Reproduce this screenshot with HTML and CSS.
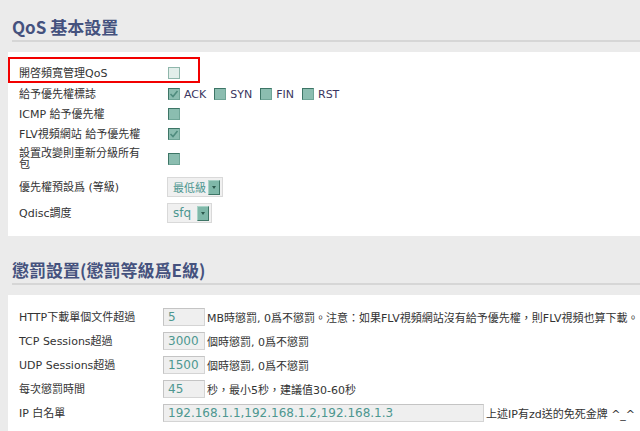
FILE: index.html
```html
<!DOCTYPE html>
<html lang="zh-Hant">
<head>
<meta charset="utf-8">
<title>QoS 基本設置</title>
<link rel="stylesheet" href="styles.css">
</head>
<body>
<div class="page">
  <section class="section">
    <div class="head head-first"><h2 class="title">QoS 基本設置</h2></div>
    <div class="panel panel-basic">
      <div class="highlight"></div>
      <div class="row r1">
        <div class="label">開啓頻寬管理QoS</div>
        <div class="field"><span class="cb cb-light"></span></div>
      </div>
      <div class="row r2">
        <div class="label">給予優先權標誌</div>
        <div class="field flags">
          <span class="cb cb-checked"><svg viewBox="0 0 10 10" width="10" height="10"><path d="M1.5 5 L4 7.5 L8.5 2" fill="none" stroke="#4f8c7e" stroke-width="1.6"/></svg></span><span class="flag">ACK</span>
          <span class="cb"></span><span class="flag">SYN</span>
          <span class="cb"></span><span class="flag">FIN</span>
          <span class="cb"></span><span class="flag">RST</span>
        </div>
      </div>
      <div class="row r3">
        <div class="label">ICMP 給予優先權</div>
        <div class="field"><span class="cb"></span></div>
      </div>
      <div class="row r4">
        <div class="label">FLV視頻網站 給予優先權</div>
        <div class="field"><span class="cb cb-checked"><svg viewBox="0 0 10 10" width="10" height="10"><path d="M1.5 5 L4 7.5 L8.5 2" fill="none" stroke="#4f8c7e" stroke-width="1.6"/></svg></span></div>
      </div>
      <div class="row r5">
        <div class="label">設置改變則重新分級所有包</div>
        <div class="field"><span class="cb"></span></div>
      </div>
      <div class="row r6">
        <div class="label">優先權預設爲 (等級)</div>
        <div class="field"><span class="select sel-level"><span class="sel-text">最低級</span><span class="arrow"></span></span></div>
      </div>
      <div class="row r7">
        <div class="label">Qdisc調度</div>
        <div class="field"><span class="select sel-qdisc"><span class="sel-text">sfq</span><span class="arrow"></span></span></div>
      </div>
    </div>
  </section>

  <section class="section">
    <div class="head"><h2 class="title">懲罰設置(懲罰等級爲E級)</h2></div>
    <div class="panel panel-penalty">
      <div class="prow">
        <div class="label">HTTP下載單個文件超過</div>
        <div class="field"><span class="input">5</span><span class="note">MB時懲罰, 0爲不懲罰。注意：如果FLV視頻網站沒有給予優先權，則FLV視頻也算下載。</span></div>
      </div>
      <div class="prow">
        <div class="label">TCP Sessions超過</div>
        <div class="field"><span class="input">3000</span><span class="note">個時懲罰, 0爲不懲罰</span></div>
      </div>
      <div class="prow">
        <div class="label">UDP Sessions超過</div>
        <div class="field"><span class="input">1500</span><span class="note">個時懲罰, 0爲不懲罰</span></div>
      </div>
      <div class="prow">
        <div class="label">每次懲罰時間</div>
        <div class="field"><span class="input">45</span><span class="note">秒，最小5秒，建議值30-60秒</span></div>
      </div>
      <div class="prow">
        <div class="label">IP 白名單</div>
        <div class="field"><span class="input input-wide">192.168.1.1,192.168.1.2,192.168.1.3</span><span class="note">上述IP有zd送的免死金牌 ^_^</span></div>
      </div>
    </div>
  </section>
</div>
</body>
</html>
```

FILE: styles.css
```css
html, body {
  margin: 0;
  padding: 0;
  background: #ebebeb;
  overflow: hidden;
}
body {
  font-family: "DejaVu Sans", "Noto Sans CJK TC", sans-serif;
  font-size: 11px;
  color: #333;
  width: 640px;
  height: 431px;
}
.page {
  width: 640px;
}
.head {
  padding-top: 22px;
}
.head-first {
  padding-top: 15px;
}
.title {
  margin: 0 0 10px 12px;
  padding: 0 0 1px 0;
  height: 24px;
  line-height: 24px;
  font-family: "Noto Sans CJK TC", sans-serif;
  font-size: 17px;
  font-weight: 700;
  color: #45527e;
  border-bottom: 2px solid #d6d6d6;
  white-space: nowrap;
}
.panel {
  margin-left: 8px;
  background: #ffffff;
  position: relative;
  padding-left: 11px;
}
.panel-basic {
  padding-top: 11px;
  padding-bottom: 13px;
}
.highlight {
  position: absolute;
  left: 0;
  top: 5px;
  width: 192px;
  height: 26px;
  box-sizing: border-box;
  border: 2px solid #f20000;
}
.row {
  display: grid;
  grid-template-columns: 149px 1fr;
  align-items: center;
  height: 20px;
}
.r2 { margin-top: 1px; }
.r5 { margin-top: 3px; height: 24px; }
.r6 { margin-top: 6px; }
.r7 { margin-top: 6px; }
.label {
  max-width: 126px;
  line-height: 11px;
}
.r5 .label {
  line-height: 11px;
}
.field {
  display: flex;
  align-items: center;
  white-space: nowrap;
}
.cb {
  box-sizing: border-box;
  width: 12px;
  height: 12px;
  background: #8bbdb0;
  border: 1px solid #6fa597;
  border-top-color: #3d7566;
  border-left-color: #3d7566;
  display: inline-flex;
  align-items: center;
  justify-content: center;
  flex: none;
}
.cb-light {
  background: #e2eeea;
  border-color: #8fb6ab;
}
.cb svg {
  display: block;
}
.flag {
  margin-left: 4px;
  margin-right: 8px;
  color: #3a3560;
}
.select {
  box-sizing: border-box;
  height: 20px;
  display: inline-flex;
  align-items: center;
  background: #f0f0f0;
  border: 1px solid #d9d9d9;
  padding-left: 5px;
  color: #4d9790;
}
.sel-level { width: 56px; margin-left: -1px; }
.sel-qdisc { width: 45px; margin-left: -1px; }
.sel-text {
  font-family: "Noto Sans CJK TC", sans-serif;
  font-size: 11px;
}
.sel-qdisc .sel-text {
  font-family: "DejaVu Sans", sans-serif;
  font-size: 12px;
}
.arrow {
  box-sizing: border-box;
  margin-left: auto;
  margin-right: 2px;
  width: 12px;
  height: 15px;
  background: #7fb8a9;
  border: 1px solid #3e7566;
  border-top-color: #a9d3c7;
  border-left-color: #a9d3c7;
  display: flex;
  align-items: center;
  justify-content: center;
}
.arrow::after {
  content: "";
  width: 0;
  height: 0;
  border-left: 2px solid transparent;
  border-right: 2px solid transparent;
  border-top: 3px solid #2c5a4e;
}
.panel-penalty {
  padding-top: 10px;
  padding-bottom: 10px;
}
.prow {
  display: grid;
  grid-template-columns: 144px 1fr;
  align-items: center;
  height: 24px;
}
.input {
  box-sizing: border-box;
  width: 42px;
  height: 18px;
  line-height: 16px;
  background: #efefef;
  border: 1px solid #d4d4d4;
  border-top-color: #c4c4c4;
  border-left-color: #c4c4c4;
  padding-left: 4px;
  color: #4d9790;
  font-size: 12px;
  flex: none;
}
.input-wide {
  width: 321px;
}
.note {
  margin-left: 2px;
  color: #333;
}
```
